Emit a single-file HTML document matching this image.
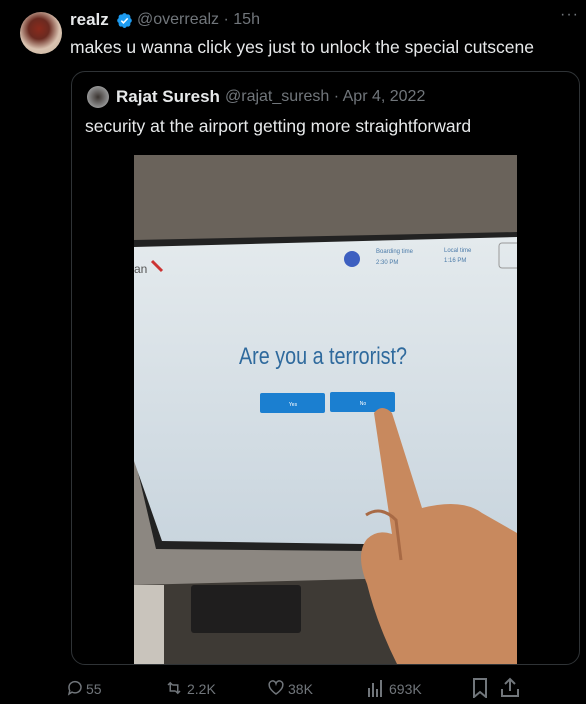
<!DOCTYPE html>
<html><head><meta charset="utf-8"><style>
*{margin:0;padding:0;box-sizing:border-box}
body{width:586px;height:704px;background:#000;font-family:"Liberation Sans",sans-serif;color:#e7e9ea;position:relative;overflow:hidden}
.a{position:absolute;white-space:nowrap}
.g{color:#71767b}
</style></head><body>
<div class="a" style="left:20px;top:12px;width:42px;height:42px;border-radius:50%;background:radial-gradient(circle at 45% 40%,#8a2a1c 0,#6a2a20 30%,#d9c2b0 60%,#c9b8a0 100%)"></div>
<div class="a" style="left:70px;top:10px;font-size:17px;font-weight:bold">realz</div>
<svg class="a" style="left:116px;top:12px" width="17" height="17" viewBox="0 0 24 24"><path fill="#1d9bf0" d="M22.3 12c0-1.5-.9-2.8-2.2-3.4.5-1.4.2-3-.8-4.1s-2.7-1.3-4.1-.8C14.6 2.4 13.4 1.5 12 1.5s-2.6.9-3.2 2.2c-1.4-.5-3-.2-4.1.8s-1.300 2.7-.8 4.1C2.6 9.2 1.7 10.5 1.7 12s.9 2.8 2.2 3.4c-.5 1.4-.2 3 .8 4.1s2.7 1.3 4.1.8c.6 1.3 1.8 2.2 3.2 2.2s2.6-.9 3.2-2.2c1.4.5 3 .3 4.1-.8s1.3-2.7.8-4.1c1.3-.6 2.2-1.9 2.2-3.4z"/><path d="M7.5 12.3l3 3 6-6.3" stroke="#fff" stroke-width="2.2" fill="none"/></svg>
<div class="a g" style="left:137px;top:11px;font-size:16px">@overrealz · 15h</div>
<div class="a g" style="left:560px;top:6px;font-size:16px;letter-spacing:1px">···</div>
<div class="a" style="left:70px;top:37px;font-size:17.5px">makes u wanna click yes just to unlock the special cutscene</div>

<div class="a" style="left:71px;top:71px;width:509px;height:594px;border:1px solid #2f3336;border-radius:14px"></div>
<div class="a" style="left:87px;top:86px;width:22px;height:22px;border-radius:50%;background:radial-gradient(circle,#3a3430 0,#888 60%,#ccc 100%)"></div>
<div class="a" style="left:116px;top:87px;font-size:17px;font-weight:bold">Rajat Suresh</div>
<div class="a g" style="left:225px;top:88px;font-size:16px">@rajat_suresh · Apr 4, 2022</div>
<div class="a" style="left:85px;top:116px;font-size:17.5px">security at the airport getting more straightforward</div>

<svg class="a" style="left:134px;top:155px" width="383" height="509" viewBox="0 0 383 509">
<rect width="383" height="509" fill="#8c8781"/>
<rect width="383" height="90" fill="#6a635b"/>
<polygon points="0,430 383,420 383,509 0,509" fill="#3e3a35"/>
<rect x="0" y="430" width="30" height="79" fill="#c9c4bc"/>
<defs><linearGradient id="s" x1="0" y1="0" x2="0" y2="1"><stop offset="0" stop-color="#e4eaed"/><stop offset="1" stop-color="#c9d5de"/></linearGradient></defs>
<polygon points="0,85 383,77 383,383 230,396 22,394 0,300" fill="#222"/>
<polygon points="0,92 383,82 383,378 230,389 28,386 0,306" fill="url(#s)"/>
<rect x="57" y="430" width="110" height="48" rx="3" fill="#1f1e1e"/>
<text x="0" y="118" font-size="12" fill="#555" font-family="Liberation Sans">an</text>
<path d="M18 106 l10 10" stroke="#c33" stroke-width="3"/>
<circle cx="218" cy="104" r="8" fill="#3d5fc0"/>
<text x="242" y="98" font-size="6" fill="#4a7aa8" font-family="Liberation Sans">Boarding time</text>
<text x="242" y="109" font-size="6" fill="#4a7aa8" font-family="Liberation Sans">2:30 PM</text>
<text x="310" y="97" font-size="6" fill="#4a7aa8" font-family="Liberation Sans">Local time</text>
<text x="310" y="107" font-size="6" fill="#4a7aa8" font-family="Liberation Sans">1:16 PM</text>
<rect x="365" y="88" width="25" height="25" rx="3" fill="none" stroke="#999"/>
<text x="189" y="209" font-size="24" fill="#2f6a9d" text-anchor="middle" font-family="Liberation Sans" textLength="168" lengthAdjust="spacingAndGlyphs">Are you a terrorist?</text>
<rect x="126" y="238" width="65" height="20" rx="2" fill="#1b7fd0"/>
<rect x="196" y="237" width="65" height="20" rx="2" fill="#1b7fd0"/>
<text x="159" y="251" font-size="5" fill="#fff" text-anchor="middle">Yes</text>
<text x="229" y="250" font-size="5" fill="#fff" text-anchor="middle">No</text>
<path d="M240 258 q8 -10 18 0 l30 95 q40 -10 60 5 l35 20 v131 h-120 q-20 -40 -30 -80 q-12 -30 0 -45 q10 -10 25 -5 z" fill="#c8895e"/>
<path d="M232 360 q15 -10 30 5 l5 40" stroke="#a86a45" stroke-width="3" fill="none"/>
</svg>

<svg class="a" style="left:66px;top:679px" width="18" height="18" viewBox="0 0 24 24" fill="none" stroke="#71767b" stroke-width="2"><path d="M4 11a8 7.5 0 1 1 4 6.5L4 20l1-4.5A7.5 7.5 0 0 1 4 11z"/></svg>
<div class="a g" style="left:86px;top:681px;font-size:14px">55</div>
<svg class="a" style="left:164px;top:679px" width="20" height="18" viewBox="0 0 24 24" fill="none" stroke="#71767b" stroke-width="2"><path d="M4 8l3-3 3 3M7 5v11h7M20 16l-3 3-3-3M17 19V8h-7"/></svg>
<div class="a g" style="left:187px;top:681px;font-size:14px">2.2K</div>
<svg class="a" style="left:267px;top:679px" width="18" height="18" viewBox="0 0 24 24" fill="none" stroke="#71767b" stroke-width="2"><path d="M12 20S3 14 3 8.5A4.5 4.5 0 0 1 12 6a4.5 4.5 0 0 1 9 2.5C21 14 12 20 12 20z"/></svg>
<div class="a g" style="left:288px;top:681px;font-size:14px">38K</div>
<svg class="a" style="left:367px;top:679px" width="16" height="18" viewBox="0 0 16 18" stroke="#71767b" stroke-width="2"><path d="M2 18V9M6 18V4M10 18V10M14 18V1"/></svg>
<div class="a g" style="left:389px;top:681px;font-size:14px">693K</div>
<svg class="a" style="left:473px;top:678px" width="14" height="20" viewBox="0 0 14 20" fill="none" stroke="#71767b" stroke-width="2"><path d="M1 1h12v18l-6-5-6 5z"/></svg>
<svg class="a" style="left:501px;top:677px" width="18" height="20" viewBox="0 0 18 20" fill="none" stroke="#71767b" stroke-width="2"><path d="M9 14V2M4 7l5-5 5 5M1 12v7h16v-7"/></svg>
</body></html>
